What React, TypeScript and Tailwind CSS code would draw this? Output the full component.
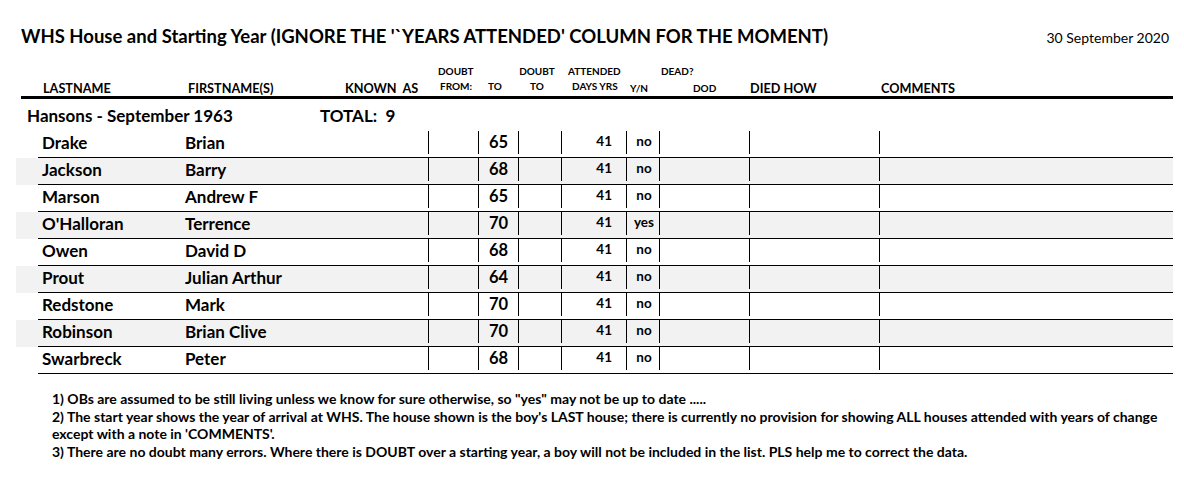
import React from "react";

type Boy = { last: string; first: string; to: string; yrs: string; alive: string };

const BOYS: Boy[] = [
  { last: "Drake", first: "Brian", to: "65", yrs: "41", alive: "no" },
  { last: "Jackson", first: "Barry", to: "68", yrs: "41", alive: "no" },
  { last: "Marson", first: "Andrew F", to: "65", yrs: "41", alive: "no" },
  { last: "O'Halloran", first: "Terrence", to: "70", yrs: "41", alive: "yes" },
  { last: "Owen", first: "David D", to: "68", yrs: "41", alive: "no" },
  { last: "Prout", first: "Julian Arthur", to: "64", yrs: "41", alive: "no" },
  { last: "Redstone", first: "Mark", to: "70", yrs: "41", alive: "no" },
  { last: "Robinson", first: "Brian Clive", to: "70", yrs: "41", alive: "no" },
  { last: "Swarbreck", first: "Peter", to: "68", yrs: "41", alive: "no" },
];

function Row({ boy, shaded }: { boy: Boy; shaded: boolean }) {
  return (
    <div className={shaded ? "ml-[16px] w-[1157px] pl-[22px] bg-[#f2f2f2]" : "ml-[16px] w-[1157px] pl-[22px]"}>
      <div className="flex h-[27px] items-start border-b border-black">
        <div className="w-[146px] pl-[4px] text-[17px] font-bold leading-[23px]">{boy.last}</div>
        <div className="w-[244px] pl-[1px] text-[17px] font-bold leading-[23px]">{boy.first}</div>
        <div className="h-[23px] w-[50px] border-l border-black" />
        <div className="h-[23px] w-[40px] border-l border-black text-center text-[16.5px] font-bold leading-[23px]">
          {boy.to}
        </div>
        <div className="h-[23px] w-[43px] border-l border-black" />
        <div className="h-[23px] w-[65px] border-l border-black pr-[14px] text-right text-[13.5px] font-bold leading-[20px]">
          {boy.yrs}
        </div>
        <div className="h-[23px] w-[33px] border-l border-black pl-[2px] text-center text-[13.5px] font-bold leading-[20px]">
          {boy.alive}
        </div>
        <div className="h-[23px] w-[90px] border-l border-black" />
        <div className="h-[23px] w-[130px] border-l border-black" />
        <div className="h-[23px] w-[294px] border-l border-black" />
      </div>
    </div>
  );
}

export default function App() {
  return (
    <div className="h-[477px] w-[1184px] overflow-hidden bg-white font-['Lato',sans-serif] text-black">
      <div className="flex items-baseline justify-between pl-[21px] pr-[15px] pt-[24px]">
        <h1 className="text-[18.5px] font-bold leading-[24px]">
          WHS House and Starting Year (IGNORE THE '`YEARS ATTENDED' COLUMN FOR THE MOMENT)
        </h1>
        <span className="text-[14px] leading-[24px]">30 September 2020</span>
      </div>

      <div className="ml-[21px] mt-[14px] flex h-[35px] w-[1152px] border-b-[3px] border-black font-bold">
        <div className="flex w-[167px] flex-col justify-end pb-[1px] pl-[22px] text-[12.7px] leading-[14px]">LASTNAME</div>
        <div className="flex w-[152px] flex-col justify-end pb-[1px] text-[12.7px] leading-[14px]">FIRSTNAME(S)</div>
        <div className="flex w-[90px] flex-col justify-end whitespace-pre pb-[1px] pl-[5px] text-[12.7px] leading-[14px]">
          KNOWN  AS
        </div>
        <div className="flex w-[52px] flex-col justify-end pb-[2px] pl-[8px] text-[10px] leading-[15px]">
          <span>DOUBT</span>
          <span className="pl-[2px]">FROM:</span>
        </div>
        <div className="flex w-[30px] flex-col justify-end pb-[2px] pl-[6px] text-[10px] leading-[15px]">TO</div>
        <div className="flex w-[50px] flex-col items-center justify-end pb-[2px] text-[10px] leading-[15px]">
          <span>DOUBT</span>
          <span>TO</span>
        </div>
        <div className="flex w-[66px] flex-col justify-end pb-[2px] pl-[6px] text-[10px] leading-[15px]">
          <span>ATTENDED</span>
          <span className="pl-[4px]">DAYS YRS</span>
        </div>
        <div className="flex w-[30px] flex-col justify-end pl-[2px] text-[10px] leading-[15px]">Y/N</div>
        <div className="flex w-[92px] flex-col justify-end text-[10px] leading-[15px]">
          <span className="pl-[3px] leading-[19px]">DEAD?</span>
          <span className="pl-[35px]">DOD</span>
        </div>
        <div className="flex w-[131px] flex-col justify-end pb-[1px] text-[12.7px] leading-[14px]">DIED HOW</div>
        <div className="flex flex-col justify-end pb-[1px] text-[12.7px] leading-[14px]">COMMENTS</div>
      </div>

      <div className="flex h-[32px] pt-[4px] text-[17px] font-bold leading-[25px]">
        <div className="ml-[27px] w-[293px]">Hansons - September 1963</div>
        <div className="whitespace-pre">TOTAL:  9</div>
      </div>

      {BOYS.map((boy, i) => (
        <Row key={boy.last} boy={boy} shaded={i % 2 === 1} />
      ))}

      <div className="ml-[52px] mt-[16px] text-[14px] font-bold leading-[17.7px]">
        <p>1) OBs are assumed to be still living unless we know for sure otherwise, so "yes" may not be up to date .....</p>
        <p className="whitespace-nowrap">
          2) The start year shows the year of arrival at WHS. The house shown is the boy's LAST house; there is currently no
          provision for showing ALL houses attended with years of change
        </p>
        <p>except with a note in 'COMMENTS'.</p>
        <p>3) There are no doubt many errors. Where there is DOUBT over a starting year, a boy will not be included in the list. PLS help me to correct the data.</p>
      </div>
    </div>
  );
}
